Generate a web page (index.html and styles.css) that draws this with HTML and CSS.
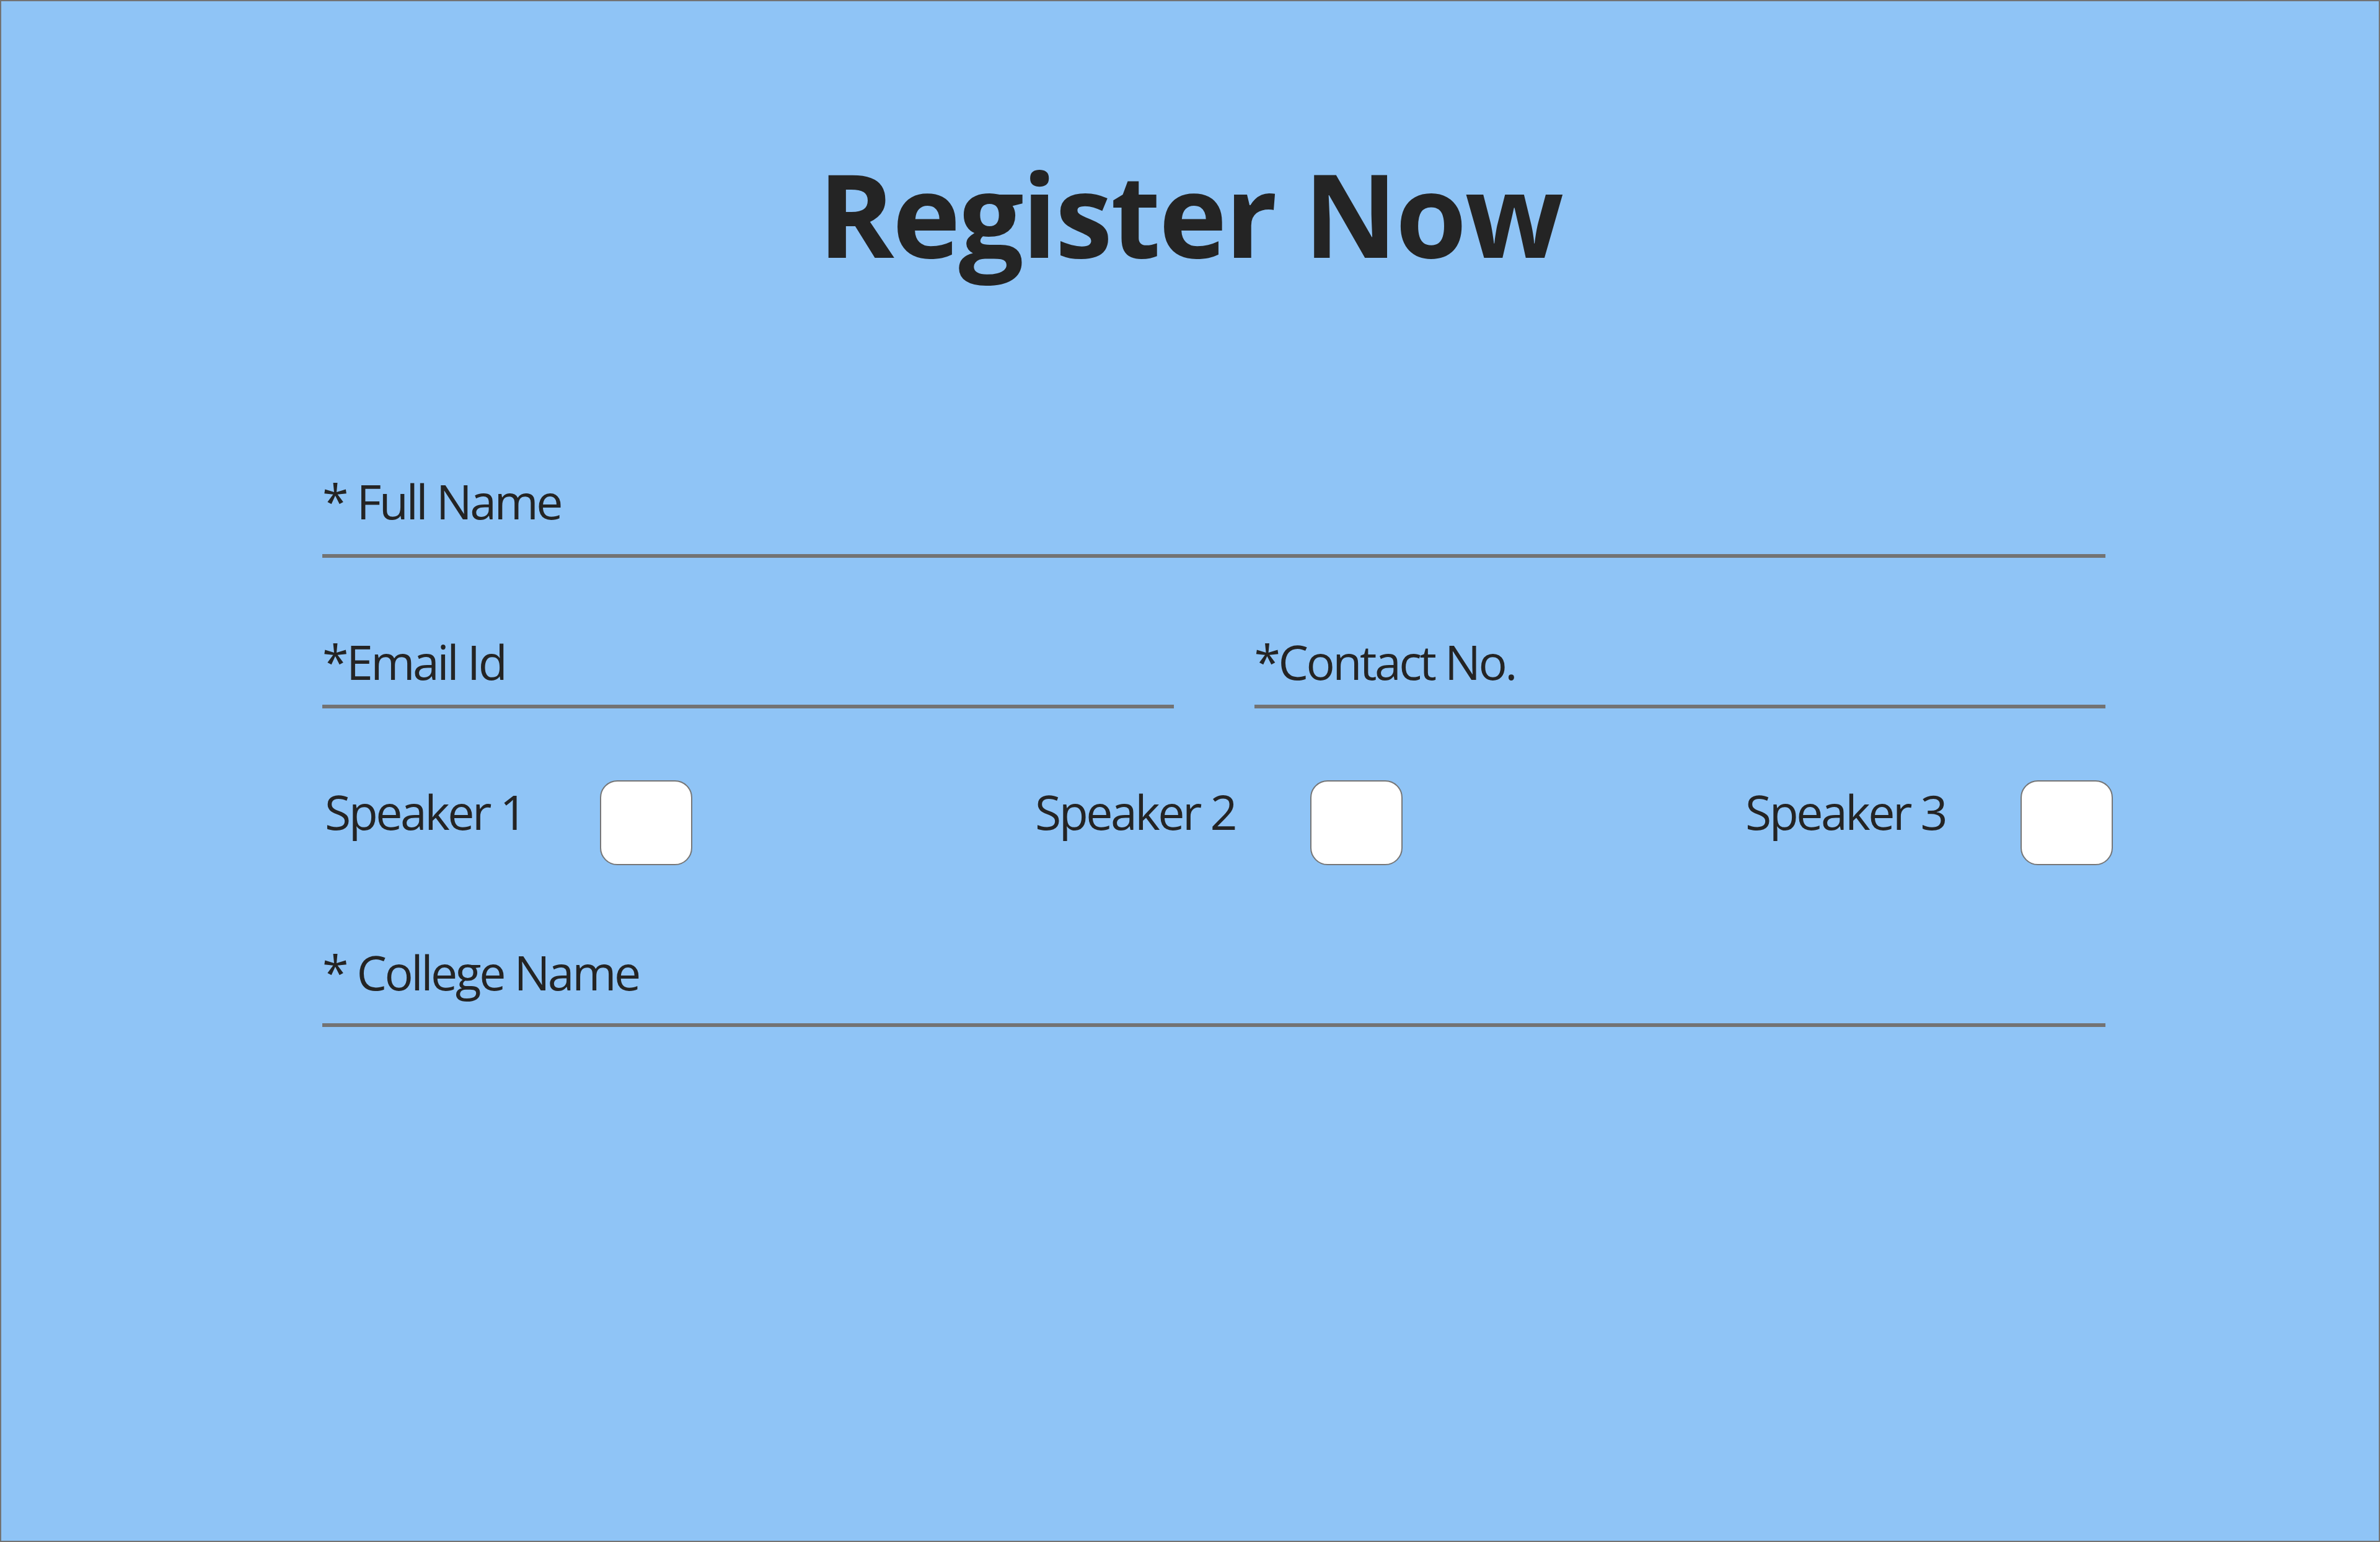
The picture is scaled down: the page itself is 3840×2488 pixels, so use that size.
FILE: index.html
```html
<!DOCTYPE html>
<html lang="en">
<head>
<meta charset="utf-8">
<title>Register Now</title>
<link rel="stylesheet" href="styles.css">
</head>
<body>
<div class="page">
  <h1 class="title">Register Now</h1>
  <form class="form">
    <div class="field field-full field-name">* Full Name</div>
    <div class="pair">
      <div class="field field-short">*Email Id</div>
      <div class="field field-short">*Contact No.</div>
    </div>
    <div class="speakers">
      <div class="speaker"><span class="speaker-label">Speaker 1</span><span class="box"></span></div>
      <div class="speaker"><span class="speaker-label">Speaker 2</span><span class="box"></span></div>
      <div class="speaker"><span class="speaker-label">Speaker 3</span><span class="box"></span></div>
    </div>
    <div class="field field-full field-college">* College Name</div>
  </form>
</div>
</body>
</html>
```
FILE: styles.css
```css
html, body {
  margin: 0;
  padding: 0;
}
body {
  font-family: "Open Sans", "Noto Sans", sans-serif;
  color: #242424;
}
.page {
  box-sizing: border-box;
  width: 3840px;
  height: 2488px;
  border: 2px solid #737373;
  background: #8fc4f6;
  overflow: hidden;
}
.title {
  margin: 249px 0 0 0;
  font-size: 186px;
  line-height: 186px;
  font-weight: 700;
  text-align: center;
  letter-spacing: -3px;
}
.form {
  display: flex;
  flex-direction: column;
  width: 2877px;
  margin: 0 0 0 518px;
}
.field {
  font-size: 77px;
  line-height: 77px;
  letter-spacing: -3.5px;
  border-bottom: 6px solid #737373;
  white-space: nowrap;
}
.field-name {
  margin-top: 333px;
  padding-bottom: 47px;
}
.pair {
  display: grid;
  grid-template-columns: 1fr 1fr;
  column-gap: 130px;
  margin-top: 129px;
}
.field-short {
  padding-bottom: 31px;
}
.speakers {
  display: flex;
  justify-content: space-between;
  align-items: flex-start;
  margin-top: 116px;
  margin-right: -12px;
}
.speaker {
  display: flex;
  align-items: flex-start;
}
.speaker-label {
  width: 444px;
  margin-top: 12px;
  padding-left: 4px;
  font-size: 77px;
  line-height: 77px;
  letter-spacing: -3.5px;
}
.box {
  box-sizing: border-box;
  width: 149px;
  height: 137px;
  border: 2px solid #767676;
  border-radius: 28px;
  background: #ffffff;
}
.field-college {
  margin-top: 134px;
  padding-bottom: 44px;
}
```
